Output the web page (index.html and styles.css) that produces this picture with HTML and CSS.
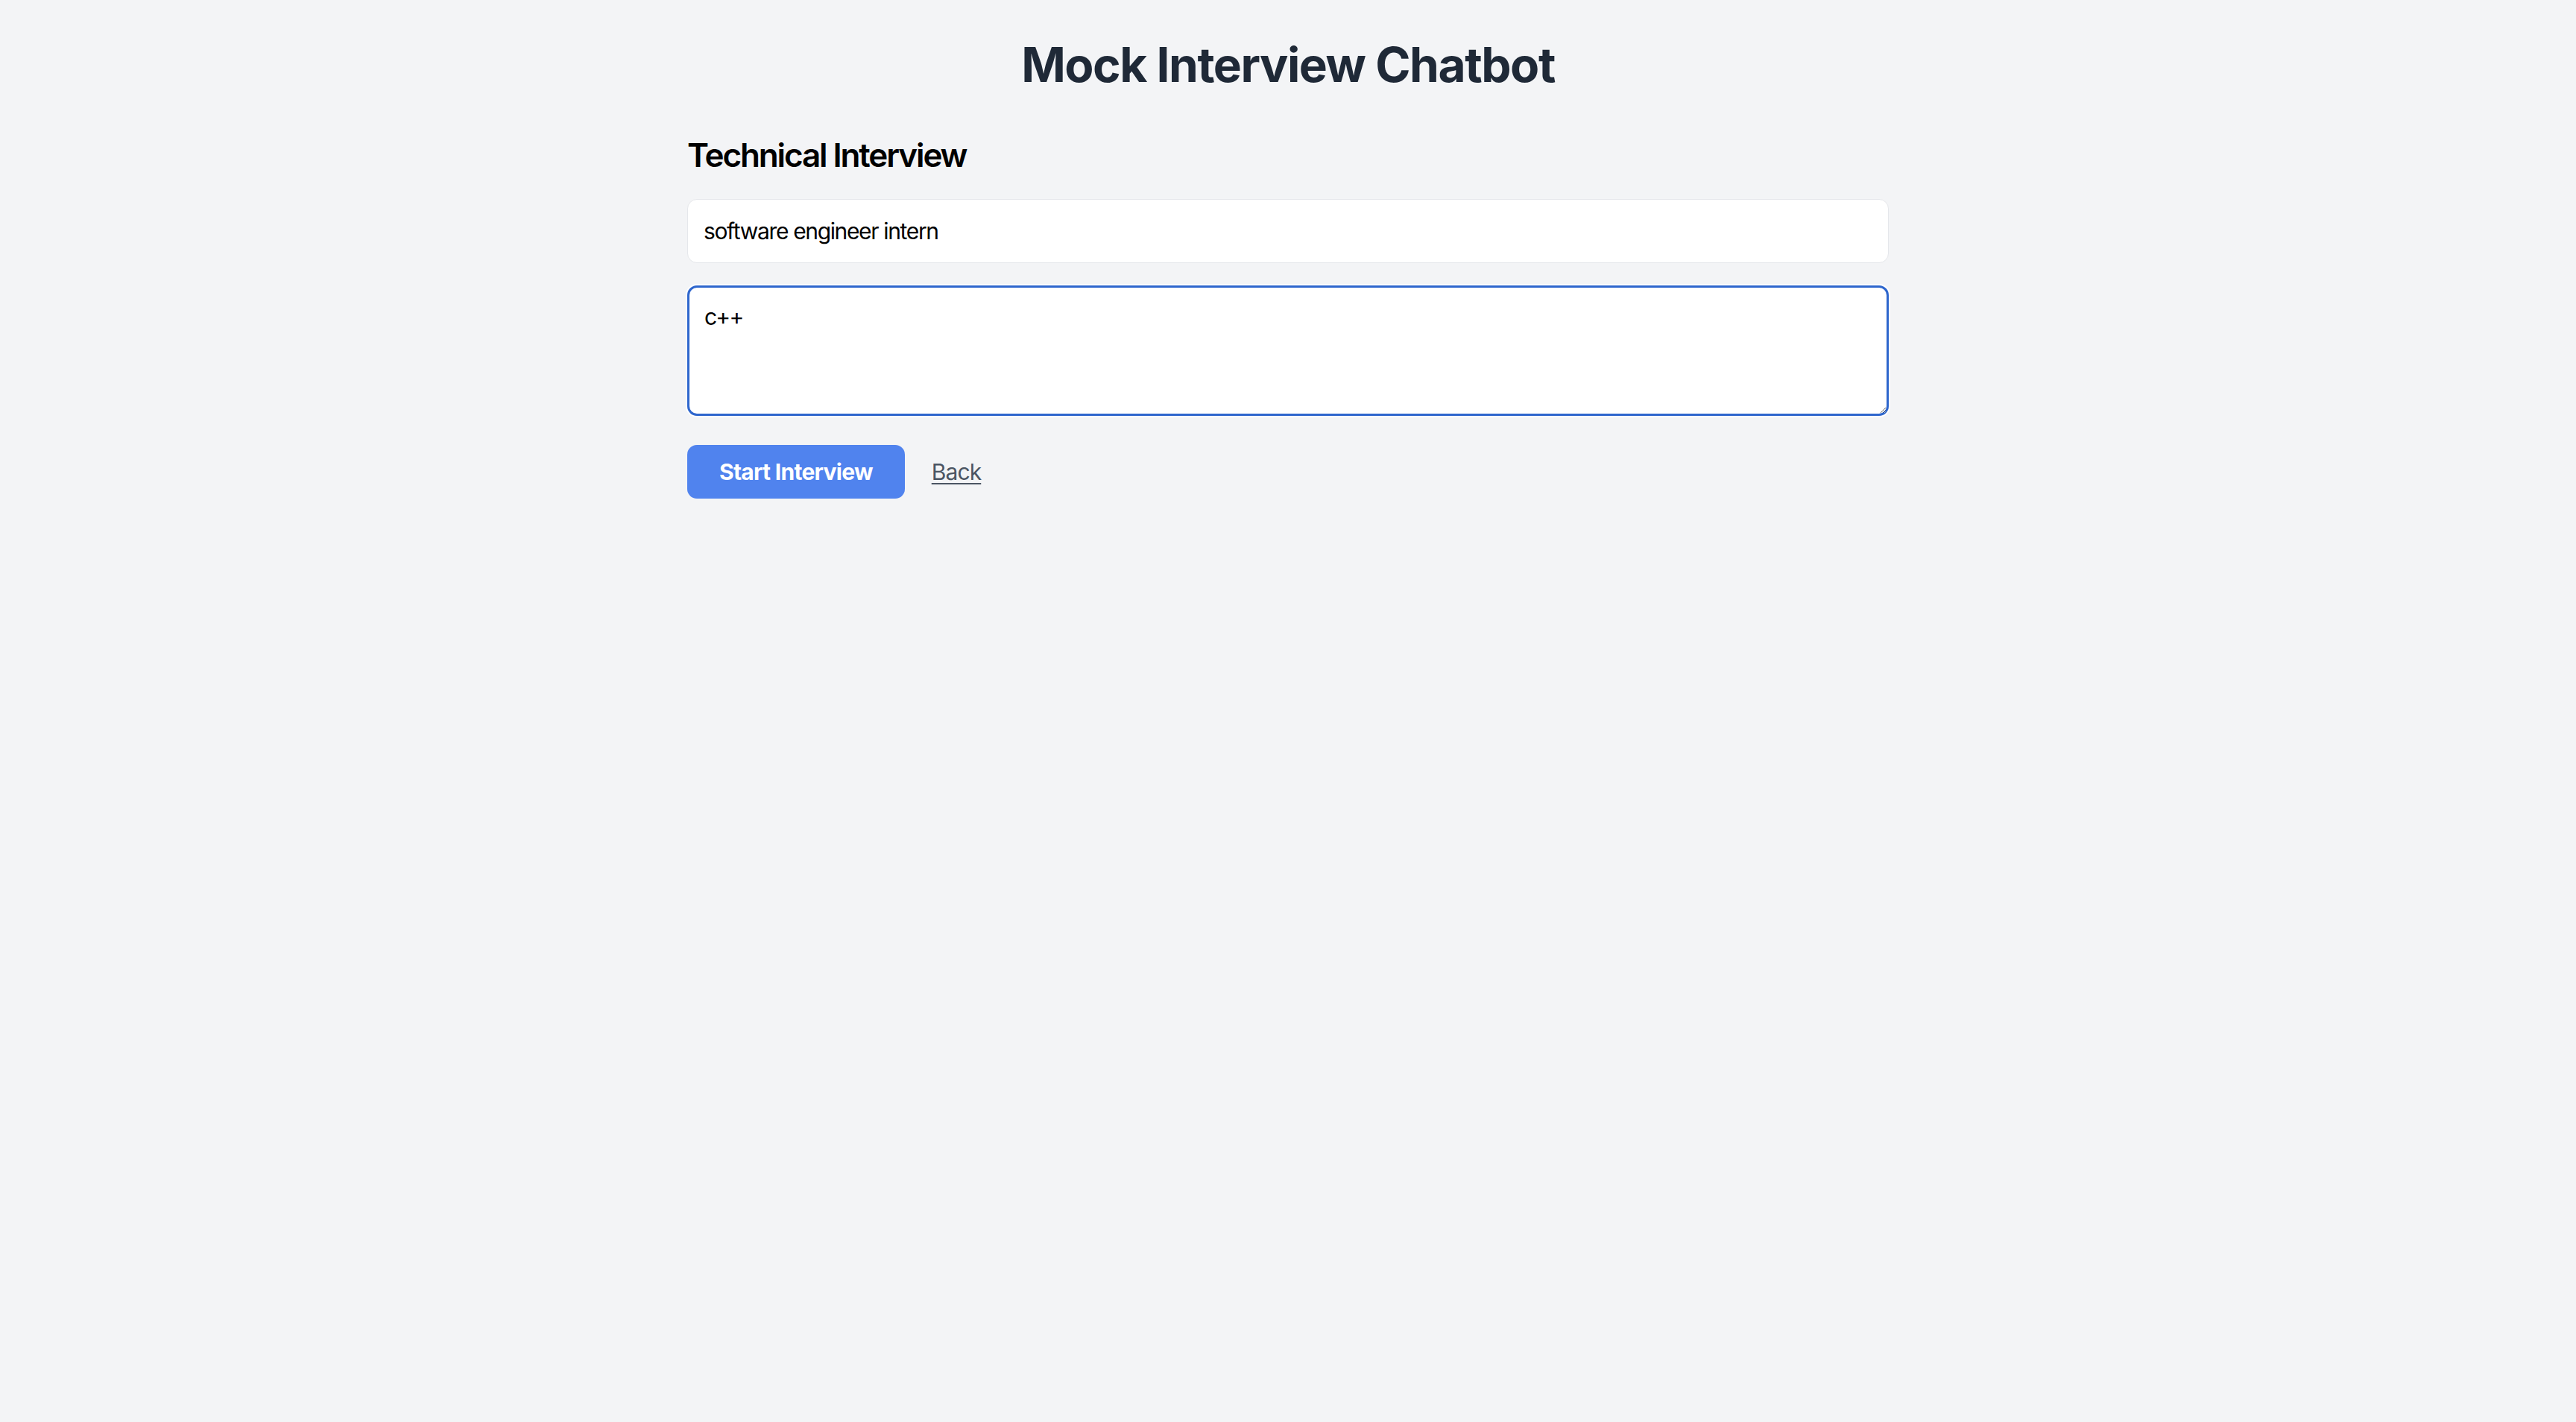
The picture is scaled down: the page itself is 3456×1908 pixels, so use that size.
FILE: index.html
```html
<!DOCTYPE html>
<html lang="en">
<head>
<meta charset="utf-8">
<title>Mock Interview Chatbot</title>
<link rel="stylesheet" href="styles.css">
</head>
<body>
<main class="page">
  <h1 class="title">Mock Interview Chatbot</h1>
  <section class="panel">
    <h2 class="heading">Technical Interview</h2>
    <input class="field" type="text" value="software engineer intern">
    <textarea class="area">c++</textarea>
    <div class="actions">
      <button class="btn" type="button">Start Interview</button>
      <a class="back" href="#">Back</a>
    </div>
  </section>
</main>
</body>
</html>
```

FILE: styles.css
```css
* { box-sizing: border-box; }
html, body {
  margin: 0;
  padding: 0;
  background: #f3f4f6;
  font-family: Inter, "Liberation Sans", sans-serif;
}
body { min-height: 1908px; }
.page {
  padding-top: 47px;
  display: flex;
  flex-direction: column;
  align-items: center;
}
.title {
  margin: 0;
  font-size: 64px;
  line-height: 80px;
  font-weight: 700;
  letter-spacing: -0.023em;
  color: #1f2937;
  text-align: center;
}
.panel {
  width: 1612px;
  margin-top: 53px;
  display: flex;
  flex-direction: column;
}
.heading {
  margin: 0;
  font-size: 44px;
  line-height: 56px;
  font-weight: 600;
  letter-spacing: -0.048em;
  color: #000;
}
.field {
  margin-top: 31px;
  height: 86px;
  padding: 0 21px;
  border: 1px solid #e5e7eb;
  border-radius: 13px;
  background: #fff;
  font-family: inherit;
  font-size: 30px;
  line-height: 44px;
  letter-spacing: -0.045em;
  color: #000;
  outline: none;
}
.area {
  margin-top: 30px;
  height: 175px;
  padding: 17px 20px;
  border: 3px solid #2e66cd;
  border-radius: 13px;
  box-shadow: 0 0 0 2px #fff;
  background: #fff;
  font-family: inherit;
  font-size: 30px;
  line-height: 44px;
  letter-spacing: -0.06em;
  color: #000;
  outline: none;
  resize: vertical;
}
.actions {
  margin-top: 39px;
  display: flex;
  align-items: center;
  gap: 36px;
}
.btn {
  height: 72px;
  padding: 0 43px;
  border: none;
  border-radius: 13px;
  background: #5083ee;
  color: #fff;
  font-family: inherit;
  font-size: 30px;
  line-height: 72px;
  font-weight: 700;
  letter-spacing: -0.024em;
  cursor: pointer;
}
.back {
  font-size: 30px;
  line-height: 72px;
  letter-spacing: -0.03em;
  color: #4b5563;
  text-decoration: underline;
  text-underline-offset: 4px;
  text-decoration-thickness: 2px;
}
```
